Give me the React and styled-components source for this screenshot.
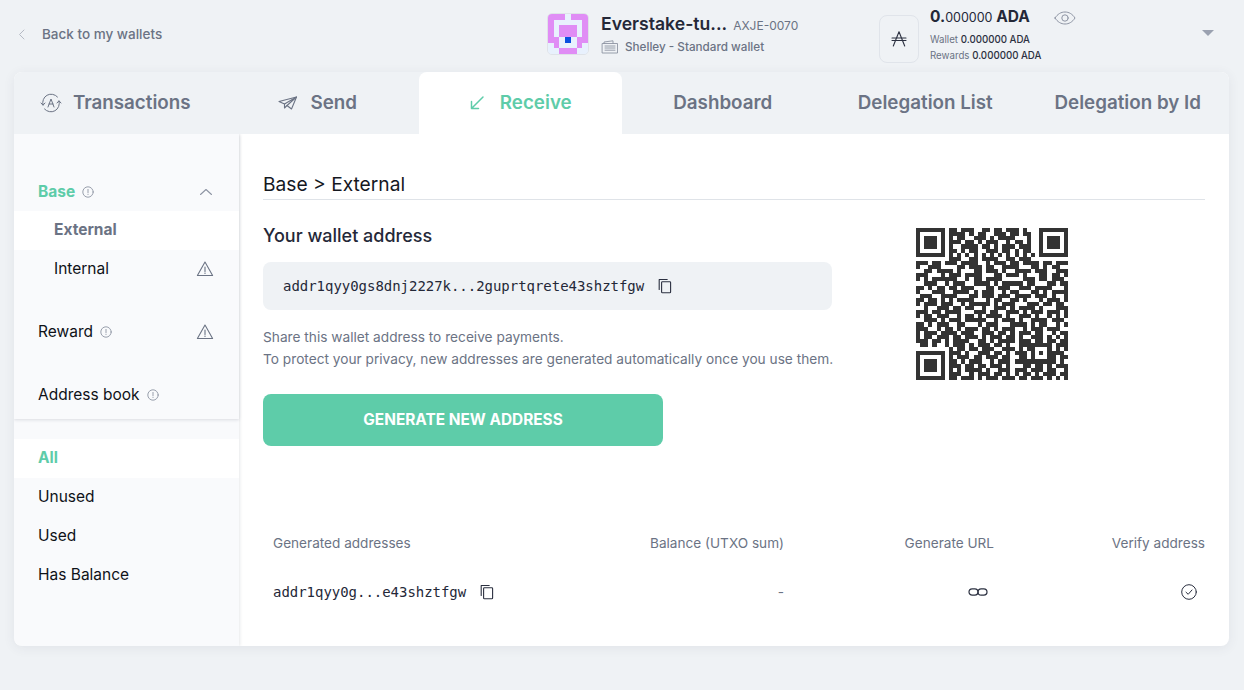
import React from 'react'
import styled, { createGlobalStyle } from 'styled-components'

const GlobalStyle = createGlobalStyle`
  * { box-sizing: border-box; }
  html, body { margin: 0; padding: 0; background: #eff2f5; }
  body { font-family: Inter, "Liberation Sans", sans-serif; color: #15181f; }
`

const Page = styled.div`
  width: 1244px;
  height: 690px;
  padding: 0 15px 44px 14px;
  display: flex;
  flex-direction: column;
  overflow: hidden;
`
const Header = styled.header`
  height: 72px;
  flex: none;
  display: flex;
`
const BackLink = styled.div`
  width: 533px;
  flex: none;
  display: flex;
  align-items: center;
  gap: 14px;
  padding: 0 0 5px 2px;
  font-size: 13.5px;
  font-weight: 500;
  color: #6b7384;
`
const WalletInfo = styled.div`
  width: 332px;
  flex: none;
  display: flex;
  gap: 12px;
  padding-top: 13px;
`
const Identicon = styled.svg`
  width: 42px;
  height: 42px;
  border-radius: 5px;
  border: 1px solid #dfe3e8;
  flex: none;
`
const WalletText = styled.div`
  display: flex;
  flex-direction: column;
  gap: 5px;
`
const NameRow = styled.div`
  display: flex;
  align-items: baseline;
  gap: 6px;
`
const WalletName = styled.span`
  font-size: 17.6px;
  font-weight: 600;
  line-height: 22px;
  color: #242838;
`
const WalletPlate = styled.span`
  font-size: 12px;
  color: #6b7384;
`
const WalletType = styled.div`
  display: flex;
  align-items: center;
  gap: 6px;
  font-size: 11.7px;
  font-weight: 500;
  color: #6b7384;
`
const BalanceArea = styled.div`
  flex: 1;
  display: flex;
  gap: 11px;
  padding-top: 15px;
`
const AdaBox = styled.div`
  width: 40px;
  height: 48px;
  flex: none;
  border: 1px solid #e0e4ea;
  border-radius: 8px;
  display: flex;
  align-items: center;
  justify-content: center;
`
const BalanceText = styled.div`
  width: 113px;
  margin-top: -9px;
  flex: none;
`
const TotalBalance = styled.div`
  font-size: 15.5px;
  font-weight: 700;
  line-height: 22px;
  color: #242838;
  white-space: nowrap;
  margin-bottom: 3px;
`
const Decimals = styled.span`
  font-size: 12.5px;
  font-weight: 400;
`
const SmallLine = styled.div`
  font-size: 9.7px;
  line-height: 16px;
  color: #6b7384;
  white-space: nowrap;
`
const SmallValue = styled.span`
  color: #2b3040;
  font-weight: 500;
`
const EyeWrap = styled.div`
  flex: none;
  margin: -6px 0 0 0;
`
const Caret = styled.div`
  width: 0;
  height: 0;
  margin: 15px 0 0 115px;
  border-left: 6px solid transparent;
  border-right: 6px solid transparent;
  border-top: 6px solid #9aa1b0;
`

const Card = styled.main`
  flex: 1;
  display: flex;
  flex-direction: column;
  border-radius: 8px;
  box-shadow: 0 2px 12px rgba(60, 70, 90, 0.08);
  overflow: hidden;
  background: #fff;
`
const Tabs = styled.nav`
  height: 62px;
  flex: none;
  display: grid;
  grid-template-columns: repeat(6, 1fr);
  background: #eff2f5;
`
const Tab = styled.div`
  display: flex;
  align-items: center;
  justify-content: center;
  gap: ${p => p.$gap || 12}px;
  font-size: 18.8px;
  font-weight: 600;
  white-space: nowrap;
  padding-bottom: 1px;
  color: ${p => (p.$active ? '#5ecca9' : '#6b7384')};
  background: ${p => (p.$active ? '#fff' : 'transparent')};
  border-radius: ${p => (p.$active ? '8px 8px 0 0' : '0')};
`
const Body = styled.div`
  flex: 1;
  display: flex;
  min-height: 0;
  overflow: hidden;
`
const Sidebar = styled.aside`
  width: 225px;
  flex: none;
  display: flex;
  flex-direction: column;
  background: #f9fafc;
  box-shadow: 1px 0 3px rgba(60, 70, 90, 0.12);
`
const AddressTypes = styled.div`
  height: 285px;
  flex: none;
  padding-top: 38px;
  box-shadow: 0 1px 3px rgba(60, 70, 90, 0.16);
`
const Filters = styled.div`
  padding-top: 20px;
`
const TypeRow = styled.div`
  height: 39px;
  margin-bottom: ${p => p.$gapBelow || 0}px;
  display: flex;
  align-items: center;
  gap: 7px;
  padding: 0 25px ${p => (p.$head ? 0 : 2)}px ${p => (p.$sub ? 40 : 24)}px;
  font-size: 15.5px;
  color: ${p => (p.$muted ? '#6b7384' : p.$green ? '#5ecca9' : '#0f1218')};
  font-weight: ${p => (p.$muted || p.$green ? 700 : 400)};
  background: ${p => (p.$selected ? '#fff' : 'transparent')};
`
const Trailing = styled.span`
  margin-left: auto;
  display: flex;
`
const Content = styled.section`
  flex: 1;
  min-width: 0;
  padding: 36px 24px 0 24px;
`
const Crumb = styled.h2`
  margin: 0;
  height: 30px;
  font-size: 19.2px;
  font-weight: 400;
  line-height: 29px;
  color: #15181f;
  border-bottom: 1px solid #dfe3e8;
`
const ReceiveRow = styled.div`
  display: flex;
`
const ReceiveLeft = styled.div`
  width: 653px;
  flex: none;
`
const SectionTitle = styled.h3`
  margin: 24px 0 14px;
  font-size: 18px;
  font-weight: 500;
  line-height: 24px;
  color: #242838;
`
const AddressBox = styled.div`
  width: 569px;
  height: 48px;
  display: flex;
  align-items: center;
  gap: 13px;
  padding-left: 20px;
  border-radius: 8px;
  background: #eff2f5;
`
const Mono = styled.span`
  font-family: "DejaVu Sans Mono", "Liberation Mono", monospace;
  font-size: 14px;
  letter-spacing: -0.03px;
  color: #242838;
  white-space: nowrap;
`
const Hint = styled.p`
  margin: 16px 0 24px;
  font-size: 13.7px;
  line-height: 22px;
  color: #6b7384;
  white-space: nowrap;
`
const GenerateButton = styled.button`
  display: block;
  width: 400px;
  height: 52px;
  padding: 0 0 2px;
  border: 0;
  border-radius: 8px;
  background: #5ecca9;
  color: #fff;
  font-family: inherit;
  font-size: 15.4px;
  font-weight: 700;
  text-transform: uppercase;
`
const QrCode = styled.svg`
  width: 152px;
  height: 152px;
  margin-top: 28px;
  flex: none;
`
const AddressTable = styled.div`
  margin-top: 82px;
  padding-left: 10px;
`
const TableRow = styled.div`
  display: grid;
  grid-template-columns: 250px 261px 210px 211px;
  align-items: center;
  height: ${p => p.$height}px;
  font-size: 13.6px;
  color: #6b7384;
`
const RightCell = styled.div`
  display: flex;
  justify-content: flex-end;
  padding-right: ${p => p.$pad || 0}px;
`
const AddressCell = styled.div`
  display: flex;
  align-items: center;
  gap: 13px;
`

const Icon = ({ size = 16, w, h, vb, color = '#6b7384', sw = 1.2, children }) => (
  <svg width={w || size} height={h || size} viewBox={vb || `0 0 ${size} ${size}`} fill="none" stroke={color} strokeWidth={sw} strokeLinecap="round" strokeLinejoin="round">
    {children}
  </svg>
)

const InfoIcon = () => (
  <Icon size={12} color="#8d94a3" sw={0.9}>
    <circle cx="6" cy="6" r="5.2" />
    <path d="M6 3.4v3.2M6 8.2v.3" />
  </Icon>
)
const WarnIcon = () => (
  <Icon size={18} color="#6b7384" sw={1.1}>
    <path d="M9 2 1.4 15.500h15.200z" />
    <path d="M9 7v4.600M9 13v.4" />
  </Icon>
)
const CopyIcon = () => (
  <Icon size={16} color="#2b3040" sw={1.1}>
    <path d="M2.200 11.500V1.500h8" />
    <rect x="4.600" y="3.800" width="9" height="11" rx="0.8" />
  </Icon>
)

// rough copy of the QR matrix, # is a dark module. finders get stamped on top
const QR_ROWS = [
  '........##.###..##.##.###.#..........',
  '........####.#.##..###.##.##.........',
  '........#.##..###.#.####...#.........',
  '........###.##.#.###..#.##.#.........',
  '........#..####.##.#.###.###.........',
  '........##.#.##..###.##.#.##.........',
  '........#.#.#.#.#.#.#.#.#.#.#........',
  '........###..##.####..##.###.........',
  '###.##.###.####..#.###.##.####.##.###',
  '#..###....##.###.##..####...##.#.##..',
  '..##.####.#...##.###.#..####.###..###',
  '###...#.###.####...##.###.#...##.##.#',
  '#.#.######..#.##.####.....###.##.###.',
  '..###..#.###..####.#.#####.##...##.##',
  '##.#.##.##.###...##.###..###.####...#',
  '#...###..####.#.###..#.##...##.#.####',
  '.###..####...##.###.###.####.###.#..#',
  '##.##.#.#.####...#.##..##.#...#.###.#',
  '#.###.###..#.#####.#.###...###.##.##.',
  '..#..###.##.##..#..###.#.####.#...###',
  '###.##.####...###.##..###.#.###.###.#',
  '#.##.###..#.##.#.####.#..###.#..#.#.#',
  '..###.#.###.#####..#.###.#..####.###.',
  '##.#.###..##...#.###...####.#.##..#.#',
  '###..#.##.#.###.##.#.###..#.###.###..',
  '#.###.####.###..###.##.#.###.##..#.##',
  '#.##.###.##.###.#.###.##.#..###.#.#.#',
  '###.##.#.####..##.#.####.###.##.##.##',
  '.##.#..#.###.#.###.##.#..###.#.##.###',
  '........#.##.##.###..###.#.##.###.#.#',
  '........###.#..###.##.#.###.##.#.###.',
  '........#.###.##.###.##..##.###..#.##',
  '........##.#.###..#.###.####.#.###.#.',
  '........###.##.##.###.#...##.##.#.###',
  '........#.#.####.#..###.###.###.##..#',
  '........###..#.###.##.#.#.##.#.###.##',
  '........##.###.#.###.###.##.###.#.#.#',
]

function buildQr() {
  const grid = QR_ROWS.map(r => r.padEnd(37, '.').split('').map(c => c === '#'))
  const stamp = (ox, oy, n) => {
    for (let y = 0; y < n; y++) {
      for (let x = 0; x < n; x++) {
        const edge = Math.min(x, y, n - 1 - x, n - 1 - y)
        grid[oy + y][ox + x] = edge !== 1
      }
    }
  }
  // separators around the two right and bottom finders
  for (let i = 0; i < 8; i++) {
    grid[i][29] = false
    grid[7][29 + i] = false
    grid[29][i] = false
    grid[29 + i][7] = false
  }
  stamp(0, 0, 7)
  stamp(30, 0, 7)
  stamp(0, 30, 7)
  stamp(28, 28, 5)
  let d = ''
  grid.forEach((row, y) => row.forEach((on, x) => {
    if (on) d += `M${x} ${y}h1v1h-1z`
  }))
  return d
}

// 0 light, 1 pink, 2 blue
const IDENTICON = [
  [1, 1, 1, 0, 1, 1, 1],
  [1, 0, 0, 0, 0, 0, 1],
  [1, 0, 1, 1, 1, 0, 1],
  [1, 0, 1, 1, 1, 0, 1],
  [1, 1, 0, 2, 0, 1, 1],
  [0, 1, 0, 0, 0, 1, 0],
  [0, 0, 1, 1, 1, 0, 0],
]
const IDENTICON_COLORS = ['#e8f1fd', '#e08df5', '#0a50e0']

export default function App() {
  return (
    <Page>
      <GlobalStyle />
      <Header>
        <BackLink>
          <Icon size={12} color="#b5bac4" sw={1}>
            <path d="M8 2 3.500 6.500 8 11" />
          </Icon>
          Back to my wallets
        </BackLink>
        <WalletInfo>
          <Identicon viewBox="0 0 7 7" shapeRendering="crispEdges">
            {IDENTICON.map((row, y) =>
              row.map((v, x) => (
                <rect key={`${x}-${y}`} x={x} y={y} width="1" height="1" fill={IDENTICON_COLORS[v]} />
              ))
            )}
          </Identicon>
          <WalletText>
            <NameRow>
              <WalletName>Everstake-tu...</WalletName>
              <WalletPlate>AXJE-0070</WalletPlate>
            </NameRow>
            <WalletType>
              <Icon w={18} h={14} vb="0 0 18 14" color="#8d94a3" sw={0.9}>
                <path d="M1.500 3.500h15v9.500h-15zM3 3.500V2l9-1.200V3.500" />
                <path d="M4 6h10M4 8h10M4 10.200h10" />
              </Icon>
              Shelley - Standard wallet
            </WalletType>
          </WalletText>
        </WalletInfo>
        <BalanceArea>
          <AdaBox>
            <Icon size={16} color="#2b3040" sw={1.1}>
              <path d="M8 .8 2.300 15M8 .8 13.700 15M1 7h14M1 9.500h14" />
            </Icon>
          </AdaBox>
          <BalanceText>
            <TotalBalance>0.<Decimals>000000</Decimals> ADA</TotalBalance>
            <SmallLine>Wallet <SmallValue>0.000000 ADA</SmallValue></SmallLine>
            <SmallLine>Rewards <SmallValue>0.000000 ADA</SmallValue></SmallLine>
          </BalanceText>
          <EyeWrap>
            <Icon w={22} h={14} vb="0 0 22 14" color="#8d94a3" sw={1}>
              <path d="M1 7c2.600-4 6-6 10-6s7.400 2 10 6c-2.600 4-6 6-10 6S3.600 11 1 7z" />
              <circle cx="11" cy="7" r="3.200" />
            </Icon>
          </EyeWrap>
          <Caret />
        </BalanceArea>
      </Header>

      <Card>
        <Tabs>
          <Tab $gap={11}>
            <Icon size={22} color="#6b7384" sw={1}>
              <path d="M3 13a8.500 8.500 0 0 1 14.500-8M19 9a8.500 8.500 0 0 1-14.500 8" />
              <path d="M1 11l2 2.200L5 11M21 11l-2-2.200L17 11" />
              <path d="M8 15l3-8 3 8M9 12h4" />
            </Icon>
            Transactions
          </Tab>
          <Tab $gap={12}>
            <Icon w={20} h={16} vb="0 0 20 16" color="#6b7384" sw={1.1}>
              <path d="M1 6.500 18.500 2 13.500 14 9 10.500 6.500 13V9z" />
              <path d="M6.500 9 18.500 2 9 10.500" />
            </Icon>
            Send
          </Tab>
          <Tab $active $gap={15}>
            <Icon size={16} color="#5ecca9" sw={1.5}>
              <path d="M14 2 2.500 13.500M2.500 6.500v7h7" />
            </Icon>
            Receive
          </Tab>
          <Tab>Dashboard</Tab>
          <Tab>Delegation List</Tab>
          <Tab>Delegation by Id</Tab>
        </Tabs>
        <Body>
          <Sidebar>
            <AddressTypes>
              <TypeRow $green $head>
                Base <InfoIcon />
                <Trailing>
                  <Icon size={16} color="#8d94a3" sw={1.1}>
                    <path d="M2.500 10.500 8 5.500l5.500 5" />
                  </Icon>
                </Trailing>
              </TypeRow>
              <TypeRow $sub $muted $selected>External</TypeRow>
              <TypeRow $sub $gapBelow={24}>
                Internal
                <Trailing><WarnIcon /></Trailing>
              </TypeRow>
              <TypeRow $gapBelow={24}>
                Reward <InfoIcon />
                <Trailing><WarnIcon /></Trailing>
              </TypeRow>
              <TypeRow>Address book <InfoIcon /></TypeRow>
            </AddressTypes>
            <Filters>
              <TypeRow $green $selected>All</TypeRow>
              <TypeRow>Unused</TypeRow>
              <TypeRow>Used</TypeRow>
              <TypeRow>Has Balance</TypeRow>
            </Filters>
          </Sidebar>
          <Content>
            <Crumb>Base &gt; External</Crumb>
            <ReceiveRow>
              <ReceiveLeft>
                <SectionTitle>Your wallet address</SectionTitle>
                <AddressBox>
                  <Mono>addr1qyy0gs8dnj2227k...2guprtqrete43shztfgw</Mono>
                  <CopyIcon />
                </AddressBox>
                <Hint>
                  Share this wallet address to receive payments.<br />
                  To protect your privacy, new addresses are generated automatically once you use them.
                </Hint>
                <GenerateButton>Generate new address</GenerateButton>
              </ReceiveLeft>
              <QrCode viewBox="0 0 37 37" shapeRendering="crispEdges">
                <path d={buildQr()} fill="#333" />
              </QrCode>
            </ReceiveRow>
            <AddressTable>
              <TableRow $height={30}>
                <div>Generated addresses</div>
                <RightCell>Balance (UTXO sum)</RightCell>
                <RightCell>Generate URL</RightCell>
                <RightCell>Verify address</RightCell>
              </TableRow>
              <TableRow $height={68}>
                <AddressCell>
                  <Mono>addr1qyy0g...e43shztfgw</Mono>
                  <CopyIcon />
                </AddressCell>
                <RightCell>-</RightCell>
                <RightCell $pad={6}>
                  <Icon w={20} h={10} vb="0 0 20 10" color="#2b3040" sw={1.200}>
                    <rect x="1" y="1.800" width="9" height="6.400" rx="3.200" />
                    <rect x="10" y="1.800" width="9" height="6.400" rx="3.200" />
                  </Icon>
                </RightCell>
                <RightCell $pad={8}>
                  <Icon size={16} color="#2b3040" sw={1}>
                    <circle cx="8" cy="8" r="7.300" />
                    <path d="M5 8.200 7.200 10.300 11 6" />
                  </Icon>
                </RightCell>
              </TableRow>
            </AddressTable>
          </Content>
        </Body>
      </Card>
    </Page>
  )
}
